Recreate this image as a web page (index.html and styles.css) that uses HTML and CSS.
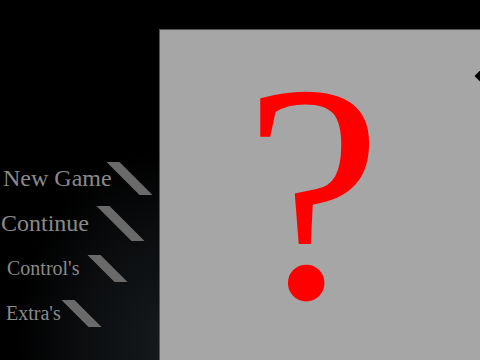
FILE: index.html
```html
<!DOCTYPE html>
<html lang="en">
<head>
  <meta charset="UTF-8" />
  <meta name="viewport" content="width=device-width, initial-scale=1.0">
  <title>Game Menu</title>
  <link rel="stylesheet" href="styles.css">
</head>
<body>

  <div class="screen">
    <nav class="menu">
      <div class="menu-item item-new">
        <span class="label">New Game</span>
        <span class="slash"></span>
      </div>
      <div class="menu-item item-continue">
        <span class="label">Continue</span>
        <span class="slash"></span>
      </div>
      <div class="menu-item item-controls">
        <span class="label">Control's</span>
        <span class="slash"></span>
      </div>
      <div class="menu-item item-extras">
        <span class="label">Extra's</span>
        <span class="slash"></span>
      </div>
    </nav>

    <main class="preview">
      <span class="mystery">?</span>
      <span class="marker"></span>
    </main>
  </div>

</body>
</html>
```

FILE: styles.css
```css
  html, body {
    margin: 0;
    height: 100%;
  }

  body {
    background: #000;
    overflow: hidden;
    font-family: "Liberation Serif", "Times New Roman", serif;
  }

  .screen {
    display: grid;
    grid-template-columns: 159px 1fr;
    height: 360px;
    background: radial-gradient(ellipse 150px 190px at 165px 340px, #161a1d 0%, #0b0d0f 55%, #000 100%);
  }

  .menu {
    display: flex;
    flex-direction: column;
    padding-top: 155px;
  }

  .menu-item {
    display: flex;
    align-items: center;
    height: 45px;
    color: #8a8a8a;
  }

  .label {
    line-height: 1;
    white-space: nowrap;
  }

  .slash {
    display: block;
    width: 13px;
    background: #6a6a6a;
    transform: skewX(45deg);
  }

  .item-new .label,
  .item-continue .label {
    font-size: 24px;
  }

  .item-controls .label,
  .item-extras .label {
    font-size: 20px;
  }

  .item-new { padding-left: 3px; }
  .item-new .slash { height: 33px; margin-left: 11px; margin-top: 2px; }

  .item-continue { padding-left: 1px; }
  .item-continue .slash { height: 35px; margin-left: 25px; margin-top: 2px; }

  .item-controls { padding-left: 7px; }
  .item-controls .slash { height: 27px; margin-left: 21px; margin-top: 2px; }

  .item-extras { padding-left: 6px; }
  .item-extras .slash { height: 27px; margin-left: 14px; margin-top: 2px; }

  .preview {
    position: relative;
    margin-top: 29px;
    background: #a6a6a6;
    border-top: 1px solid #555;
    border-left: 1px solid #555;
    display: flex;
    justify-content: center;
    align-items: flex-start;
    padding-right: 14px;
  }

  .mystery {
    color: #f00;
    font-size: 310px;
    line-height: 240px;
    margin-top: 43px;
  }

  .marker {
    position: absolute;
    top: 40px;
    right: -9px;
    width: 12px;
    height: 12px;
    background: #000;
    transform: rotate(45deg);
  }
```
